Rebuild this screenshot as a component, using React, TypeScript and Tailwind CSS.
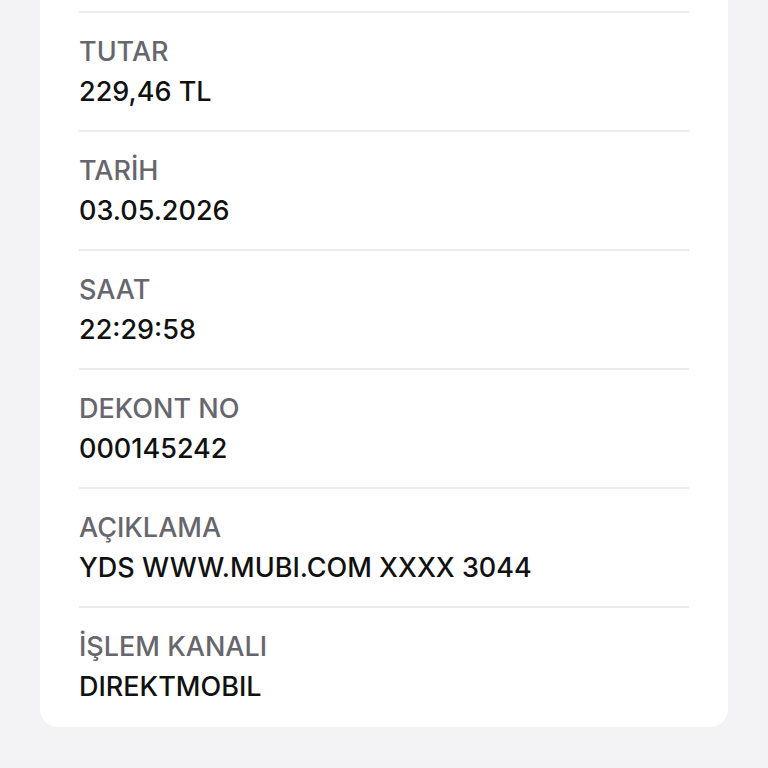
const rows = [
  { label: "TUTAR", value: "229,46 TL" },
  { label: "TARİH", value: "03.05.2026" },
  { label: "SAAT", value: "22:29:58" },
  { label: "DEKONT NO", value: "000145242" },
  { label: "AÇIKLAMA", value: "YDS WWW.MUBI.COM XXXX 3044" },
  { label: "İŞLEM KANALI", value: "DIREKTMOBIL" },
];

export default function App() {
  return (
    <div
      className="min-h-screen bg-[#f3f3f5] px-[40px]"
      style={{ fontFamily: "Inter, 'Noto Sans', sans-serif" }}
    >
      <div className="bg-white rounded-b-[18px] px-[39px] pt-[11px] pb-[2px]">
        {rows.map((row) => (
          <div key={row.label} className="border-t-2 border-[#ebebed] pt-[23px] pb-[22px]">
            <div className="text-[27px] leading-[32px] font-medium text-[#67666d]">
              {row.label}
            </div>
            <div className="mt-[8px] text-[27px] leading-[32px] font-medium text-[#111111]">
              {row.value}
            </div>
          </div>
        ))}
      </div>
    </div>
  );
}
